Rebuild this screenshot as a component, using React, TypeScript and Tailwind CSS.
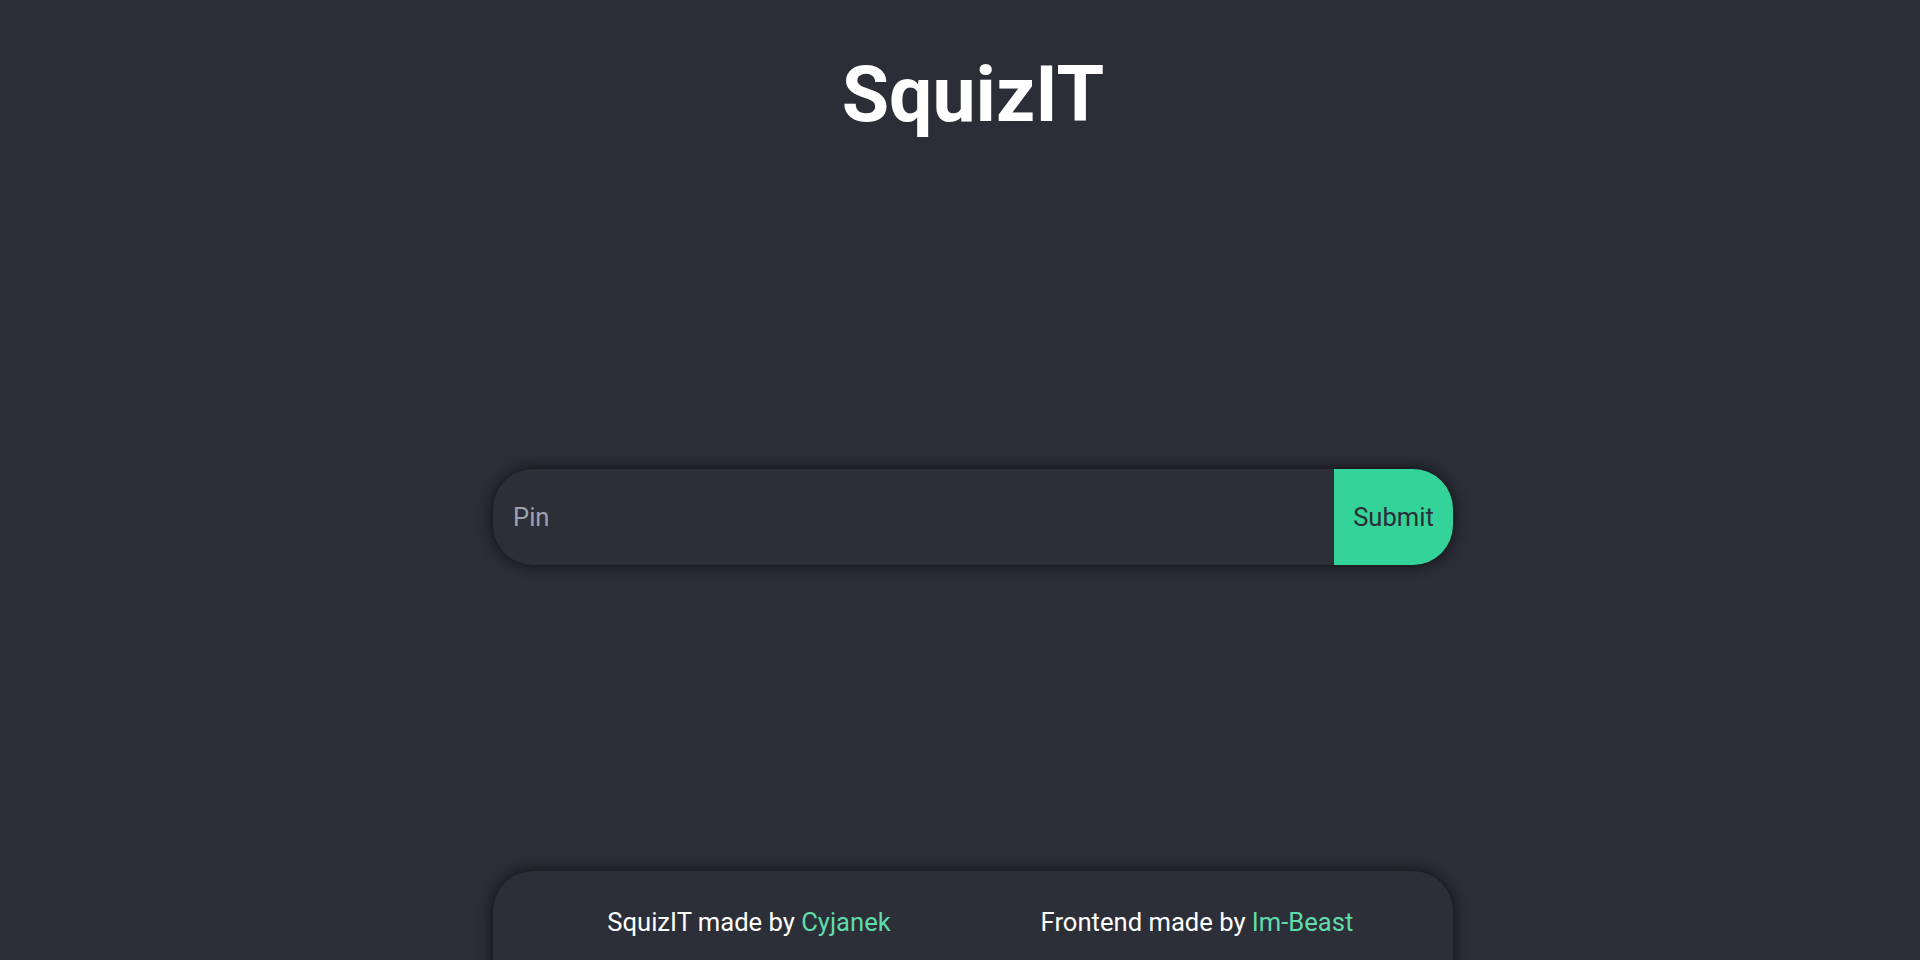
import React from "react";

const App = () => {
  return (
    <div className="h-screen overflow-hidden bg-[#2b2d37] flex flex-col items-center pl-[26px] font-['Roboto',sans-serif] text-white">
      <h1 className="mt-[49px] text-[77px] leading-[1.2] font-bold">SquizIT</h1>

      <form
        className="mt-[328px] w-[960px] h-[96px] shrink-0 flex rounded-[40px] bg-[#2c2e38] shadow-[0_0_14px_rgba(0,0,0,0.7)] overflow-hidden"
        onSubmit={(e) => e.preventDefault()}
      >
        <input
          type="text"
          placeholder="Pin"
          className="flex-1 bg-transparent pl-5 text-[25.6px] text-white placeholder:text-[#9ca3af] outline-none"
        />
        <button
          type="submit"
          className="w-[119px] bg-[#34d399] text-[25.6px] text-[#2b2d37]"
        >
          Submit
        </button>
      </form>

      <footer className="mt-[306px] w-[960px] h-[130px] shrink-0 rounded-[40px] bg-[#2c2e38] shadow-[0_0_14px_rgba(0,0,0,0.7)] grid grid-cols-2 px-8 pt-[35px] text-[25.6px] leading-8">
        <p className="text-center">
          SquizIT made by <span className="text-[#5fdcaa]">Cyjanek</span>
        </p>
        <p className="text-center">
          Frontend made by <span className="text-[#5fdcaa]">Im-Beast</span>
        </p>
      </footer>
    </div>
  );
};

export default App;
